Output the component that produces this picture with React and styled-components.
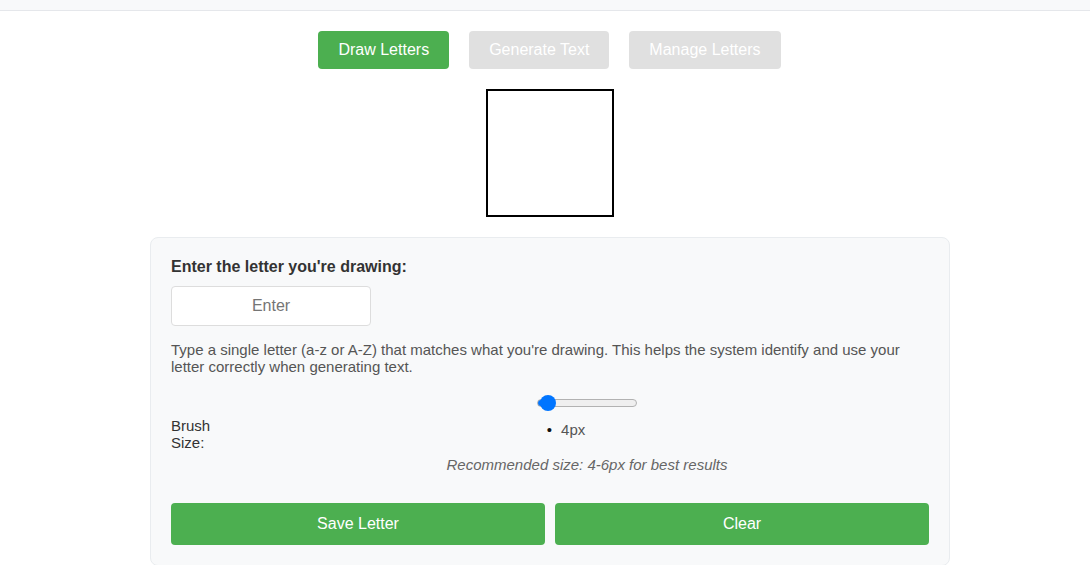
import React, { useState } from "react";
import styled, { createGlobalStyle } from "styled-components";

const GlobalStyle = createGlobalStyle`
  body {
    margin: 0;
    background: #fff;
    font-family: "Liberation Sans", Arial, sans-serif;
    color: #333;
  }
`;

const TopBar = styled.div`
  height: 10px;
  background: #f8f9fa;
  border-bottom: 1px solid #e5e7eb;
`;

const Page = styled.div`
  display: flex;
  flex-direction: column;
  align-items: center;
  padding: 20px 0 0 10px;
`;

const Tabs = styled.nav`
  display: flex;
  gap: 20px;
  margin: 0 1px 20px 0;
`;

const Tab = styled.button`
  height: 38px;
  padding: 0 20px;
  border: none;
  border-radius: 4px;
  font-family: inherit;
  font-size: 16px;
  color: #fff;
  background: ${(p) => (p.$active ? "#4caf50" : "#e0e0e0")};
  cursor: pointer;
`;

const Canvas = styled.div`
  width: 124px;
  height: 124px;
  border: 2px solid #000;
  background: #fff;
  margin-bottom: 20px;
`;

const Card = styled.section`
  box-sizing: border-box;
  width: 800px;
  padding: 20px;
  background: #f8f9fa;
  border: 1px solid #e9ecef;
  border-radius: 8px;
`;

const Label = styled.label`
  display: block;
  font-weight: bold;
  font-size: 16px;
  color: #333;
  margin-bottom: 10px;
`;

const LetterInput = styled.input`
  box-sizing: border-box;
  width: 200px;
  height: 40px;
  border: 1px solid #ddd;
  border-radius: 4px;
  font-family: inherit;
  font-size: 16px;
  text-align: center;
  background: #fff;
  &::placeholder {
    color: #757575;
  }
`;

const Help = styled.p`
  margin: 15px 0 0;
  font-size: 15px;
  color: #555;
`;

const BrushRow = styled.div`
  display: flex;
  align-items: center;
  margin-top: 20px;
`;

const BrushLabel = styled.span`
  width: 64px;
  margin-right: 10px;
  font-size: 15px;
  color: #333;
`;

const BrushControls = styled.div`
  flex: 1;
  text-align: center;
`;

const Slider = styled.input`
  display: block;
  width: 100px;
  height: 16px;
  margin: 0 auto;
  padding: 0;
  appearance: none;
  -webkit-appearance: none;
  background: transparent;

  &::-webkit-slider-runnable-track {
    box-sizing: border-box;
    height: 8px;
    border: 1px solid #b2b2b2;
    border-radius: 4px;
    background: linear-gradient(
      to right,
      #0075ff var(--fill),
      #efefef var(--fill)
    );
  }

  &::-webkit-slider-thumb {
    -webkit-appearance: none;
    appearance: none;
    width: 16px;
    height: 16px;
    margin-top: -5px;
    border: none;
    border-radius: 50%;
    background: #0075ff;
  }
`;

const SizeList = styled.ul`
  margin: 10px 42px 0 0;
  padding: 0;
  list-style: none;
  font-size: 15px;
`;

const SizeItem = styled.li`
  color: #555;
  &::before {
    content: "•";
    color: #111;
    margin-right: 9px;
  }
`;

const Hint = styled.p`
  margin: 18px 0 0;
  font-size: 15px;
  font-style: italic;
  color: #666;
`;

const Actions = styled.div`
  display: flex;
  gap: 10px;
  margin-top: 30px;
`;

const ActionButton = styled.button`
  flex: 1;
  height: 42px;
  border: none;
  border-radius: 4px;
  background: #4caf50;
  color: #fff;
  font-family: inherit;
  font-size: 16px;
  cursor: pointer;
`;

const MIN = 1;
const MAX = 100;

export default function App() {
  const [size, setSize] = useState(4);
  const fill = ((size - MIN) / (MAX - MIN)) * 84 + 8;
  return (
    <>
      <GlobalStyle />
      <TopBar />
      <Page>
        <Tabs>
          <Tab $active>Draw Letters</Tab>
          <Tab>Generate Text</Tab>
          <Tab>Manage Letters</Tab>
        </Tabs>
        <Canvas />
        <Card>
          <Label>Enter the letter you're drawing:</Label>
          <LetterInput placeholder="Enter" maxLength={1} />
          <Help>
            Type a single letter (a-z or A-Z) that matches what you're drawing. This helps the
            system identify and use your letter correctly when generating text.
          </Help>
          <BrushRow>
            <BrushLabel>Brush Size:</BrushLabel>
            <BrushControls>
              <Slider
                type="range"
                min={MIN}
                max={MAX}
                value={size}
                style={{ "--fill": `${fill}px` }}
                onChange={(e) => setSize(Number(e.target.value))}
              />
              <SizeList>
                <SizeItem>{size}px</SizeItem>
              </SizeList>
              <Hint>Recommended size: 4-6px for best results</Hint>
            </BrushControls>
          </BrushRow>
          <Actions>
            <ActionButton>Save Letter</ActionButton>
            <ActionButton>Clear</ActionButton>
          </Actions>
        </Card>
      </Page>
    </>
  );
}
